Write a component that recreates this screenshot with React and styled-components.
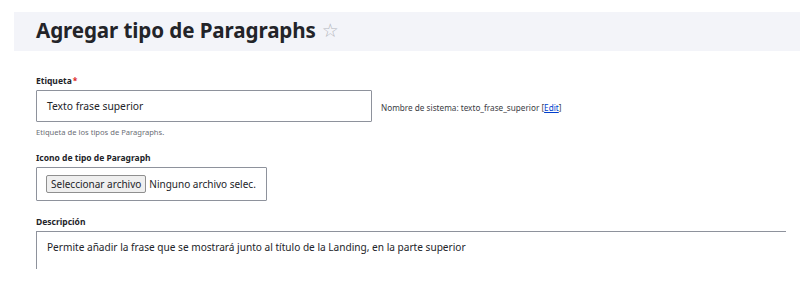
import React from "react";
import styled, { createGlobalStyle } from "styled-components";

const GlobalStyle = createGlobalStyle`
  html, body {
    margin: 0;
    padding: 0;
    background: #fff;
  }
  body {
    font-family: "Noto Sans", "Open Sans", sans-serif;
    color: #232429;
  }
`;

const App = () => {
  return (
    <StyledPage>
      <GlobalStyle />
      <StyledHeader>
        <StyledTitle>Agregar tipo de Paragraphs</StyledTitle>
        <StyledStar>☆</StyledStar>
      </StyledHeader>
      <StyledForm>
        <StyledField>
          <StyledLabel>
            Etiqueta<StyledRequired>*</StyledRequired>
          </StyledLabel>
          <StyledInline>
            <StyledInput>Texto frase superior</StyledInput>
            <StyledMachineName>
              Nombre de sistema: texto_frase_superior [<StyledLink>Edit</StyledLink>]
            </StyledMachineName>
          </StyledInline>
          <StyledHelp>Etiqueta de los tipos de Paragraphs.</StyledHelp>
        </StyledField>
        <StyledField>
          <StyledLabel>Icono de tipo de Paragraph</StyledLabel>
          <StyledFileBox>
            <StyledFileButton>Seleccionar archivo</StyledFileButton>
            <StyledFileText>Ninguno archivo selec.</StyledFileText>
          </StyledFileBox>
        </StyledField>
        <StyledField>
          <StyledLabel>Descripción</StyledLabel>
          <StyledTextarea>
            Permite añadir la frase que se mostrará junto al título de la Landing, en la parte superior
          </StyledTextarea>
        </StyledField>
      </StyledForm>
    </StyledPage>
  );
};

export default App;

const StyledPage = styled.div`
  width: 800px;
  height: 269px;
  overflow: hidden;
  padding-top: 12px;
  box-sizing: border-box;
`;

const StyledHeader = styled.div`
  margin-left: 14px;
  height: 39px;
  background-color: #f3f4f9;
  display: flex;
  align-items: center;
  padding-left: 22px;
  padding-bottom: 4px;
  box-sizing: border-box;
`;

const StyledTitle = styled.h1`
  margin: 0;
  font-size: 20.6px;
  font-weight: 700;
  color: #232429;
  letter-spacing: -0.1px;
`;

const StyledStar = styled.span`
  margin-left: 6px;
  font-size: 19px;
  color: #b4b6bd;
  font-family: "DejaVu Sans", sans-serif;
`;

const StyledForm = styled.div`
  padding: 0 15px 0 36px;
  margin-top: 24px;
  display: flex;
  flex-direction: column;
  gap: 15px;
`;

const StyledField = styled.div`
  display: flex;
  flex-direction: column;
`;

const StyledLabel = styled.div`
  font-size: 8.5px;
  font-weight: 700;
  line-height: 12px;
  margin-bottom: 3px;
`;

const StyledRequired = styled.span`
  color: #dc2323;
  margin-left: 1px;
`;

const StyledInline = styled.div`
  display: flex;
  align-items: center;
  gap: 9px;
`;

const StyledInput = styled.div`
  width: 336px;
  height: 32px;
  box-sizing: border-box;
  border: 1px solid #8e929c;
  border-radius: 1px;
  padding: 0 10px;
  display: flex;
  align-items: center;
  font-size: 10.3px;
  color: #232429;
`;

const StyledMachineName = styled.div`
  font-size: 8.2px;
  color: #3b3d44;
  padding-top: 2px;
`;

const StyledLink = styled.span`
  color: #003ecc;
  text-decoration: underline;
`;

const StyledHelp = styled.div`
  font-size: 7.6px;
  color: #6b6e76;
  margin-top: 5px;
`;

const StyledFileBox = styled.div`
  width: 231px;
  height: 34px;
  box-sizing: border-box;
  border: 1px solid #8e929c;
  border-radius: 1px;
  padding: 0 9px;
  display: flex;
  align-items: center;
  gap: 3px;
`;

const StyledFileButton = styled.div`
  height: 18px;
  box-sizing: border-box;
  padding: 0 4px;
  border: 1px solid #8f8f8f;
  border-radius: 2px;
  background-color: #efefef;
  font-size: 10px;
  display: flex;
  align-items: center;
  color: #232429;
`;

const StyledFileText = styled.span`
  font-size: 10px;
  color: #232429;
`;

const StyledTextarea = styled.div`
  width: 750px;
  height: 60px;
  box-sizing: border-box;
  border-top: 1px solid #8e929c;
  border-left: 1px solid #8e929c;
  padding: 8px 10px;
  font-size: 10.1px;
  color: #232429;
`;
